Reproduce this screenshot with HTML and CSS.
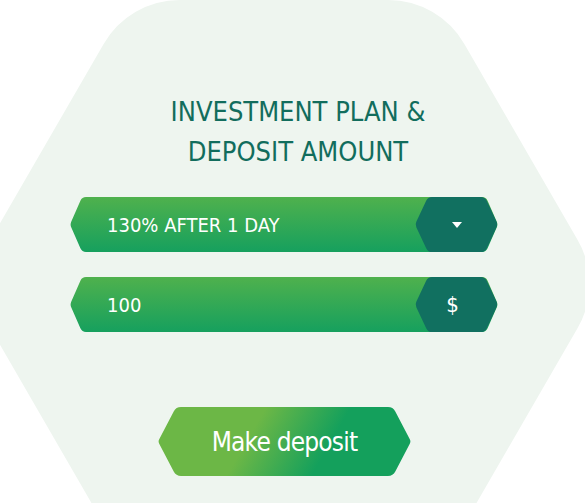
FILE: index.html
```html
<!DOCTYPE html>
<html>
	<head>
		<meta charset="utf-8">
		<title>Deposit</title>
		<link rel="stylesheet" href="styles.css">
	</head>
	<body>
		<div class="stage">
			<!-- фон: шестиугольник со скруглёнными углами -->
			<svg class="hex" width="585" height="503" viewBox="0 0 585 503">
				<path d="M180 0 L388 0 A88 88 0 0 1 464.5 44.2 L577.5 239.8 A88 88 0 0 1 577.5 328.2 L464.5 523.8 A88 88 0 0 1 388 568 L180 568 A88 88 0 0 1 103.5 523.8 L-9.5 328.2 A88 88 0 0 1 -9.5 239.8 L103.5 44.2 A88 88 0 0 1 180 0 Z" fill="#eef5ef"/>
			</svg>
			<form class="form">
				<h2 class="title">INVESTMENT PLAN &amp;<br>DEPOSIT AMOUNT</h2>
				<div class="field">
					<span class="value">130% AFTER 1 DAY</span>
					<span class="addon">
						<svg width="10" height="6" viewBox="0 0 10 6"><polygon points="0,0 10,0 5,6" fill="#fff"/></svg>
					</span>
				</div>
				<div class="field">
					<span class="value">100</span>
					<span class="addon addon-cur">$</span>
				</div>
				<button type="button" class="btn">Make deposit</button>
			</form>
		</div>
	</body>
</html>
```

FILE: styles.css
```css
*{
	margin: 0;
	padding: 0;
}
body{
	background-color: #fff;
	font-family: "DejaVu Sans Condensed", "DejaVu Sans", sans-serif;
}
.stage{
	width: 585px;
	height: 503px;
	position: relative;
	overflow: hidden;
}
.hex{
	position: absolute;
	left: 0;
	top: 0;
}
.form{
	position: relative;
	display: flex;
	flex-direction: column;
	align-items: flex-start;
	padding-top: 92px;
}
.title{
	width: 456px;
	margin-left: 70px;
	text-align: center;
	font-size: 27px;
	line-height: 40px;
	font-weight: normal;
	color: #126d5d;
	margin-bottom: 25px;
}
/* шестиугольные поля, углы чуть скруглены */
.field{
	width: 428px;
	height: 55px;
	margin-left: 70px;
	margin-bottom: 25px;
	display: flex;
	align-items: center;
	background: linear-gradient(180deg, #4fb14d 0%, #16a05e 100%);
	clip-path: path("M16 0 H412 Q416 0 417.6 3.7 L426.8 24.75 Q428 27.5 426.8 30.25 L417.6 51.3 Q416 55 412 55 H16 Q12 55 10.4 51.3 L1.2 30.25 Q0 27.5 1.2 24.75 L10.4 3.7 Q12 0 16 0 Z");
}
.value{
	flex: 1;
	padding-left: 37px;
	color: #fff;
	font-size: 20px;
}
.addon{
	width: 83px;
	height: 100%;
	display: flex;
	align-items: center;
	justify-content: center;
	background-color: #117060;
	color: #fff;
	font-size: 22px;
	clip-path: path("M17 0 H66 Q70 0 71.7 3.6 L81.7 24.8 Q83 27.5 81.7 30.2 L71.7 51.4 Q70 55 66 55 H17 Q13 55 11.3 51.4 L1.3 30.2 Q0 27.5 1.3 24.8 L11.3 3.6 Q13 0 17 0 Z");
}
.addon-cur{
	padding-right: 8px;
	box-sizing: border-box;
}
.btn{
	margin-top: 50px;
	margin-left: 158px;
	width: 253px;
	height: 69px;
	border: 0;
	color: #fff;
	font-family: inherit;
	font-size: 26px;
	letter-spacing: -0.8px;
	background: linear-gradient(120deg, #6cb746 37%, #14a05c 66%);
	clip-path: path("M23 0 H230 Q235 0 237.3 4.4 L251.8 32.3 Q253 34.5 251.8 36.7 L237.3 64.6 Q235 69 230 69 H23 Q18 69 15.7 64.6 L1.2 36.7 Q0 34.5 1.2 32.3 L15.7 4.4 Q18 0 23 0 Z");
	cursor: pointer;
}
```
